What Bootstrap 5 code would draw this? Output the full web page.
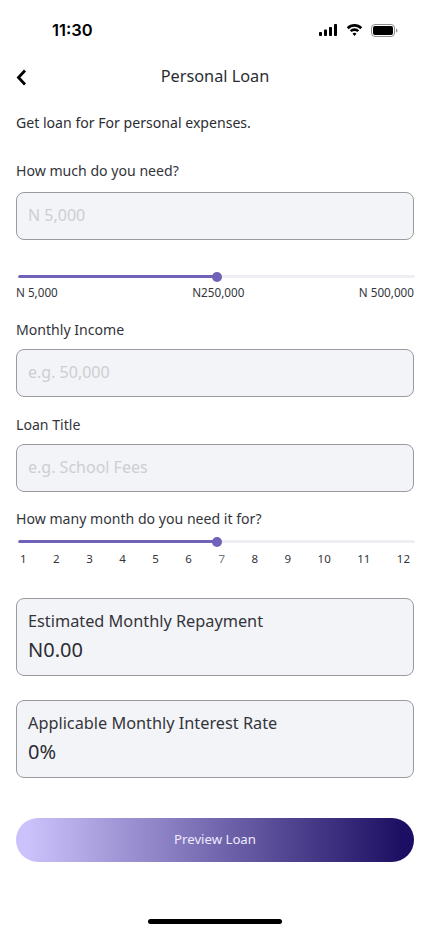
<!DOCTYPE html>
<html lang="en">
<head>
<meta charset="utf-8">
<title>Personal Loan</title>
<meta name="viewport" content="width=device-width, initial-scale=1">
<link href="https://cdn.jsdelivr.net/npm/bootstrap@5.3.0/dist/css/bootstrap.min.css" rel="stylesheet">
<style>
html,body{height:100%}
body{font-family:"Noto Sans","Open Sans",sans-serif;color:#2b2d33;background:#fff;font-size:14px}
.phone{width:430px;height:932px;overflow:hidden;background:#fff}
.status-bar{height:60px;padding:0 32px 0 52px;align-items:center}
.status-time{font-family:Inter,"Liberation Sans",sans-serif;font-weight:600;font-size:16.5px;line-height:20px;color:#000}
.head-row{height:32px;padding:0 16px;position:relative;align-items:center;justify-content:center}
.head-back{position:absolute;left:16px;top:9px;line-height:0;background:none;border:0;padding:0}
.head-title{font-size:16.3px;line-height:32px;margin:0;font-weight:400;color:#2b2d33}
.content{padding:0 16px}
.intro{margin:19px 0 0;line-height:24px;font-size:14.1px;height:24px}
.fld-label{font-size:14.1px;line-height:20px;margin:0;color:#33353b;display:block}
.fld-input.form-control{height:48px;background:#f3f4f8;border:1px solid #9b9b9f;border-radius:8px;font-size:16px;padding:0 11px 2px;color:#22242a;font-family:"Noto Sans",sans-serif}
.fld-input.form-control::placeholder{color:#cdced1;opacity:1}
.range-wrap{position:relative;margin-left:2px;width:397px}
.range-wrap .progress{height:3px;background:#eeeef3;border-radius:2px}
.range-wrap .progress-bar{background:#6f62b8;border-radius:2px}
.range-knob{position:absolute;top:-3.5px;width:10px;height:10px;border-radius:50%;background:#6f62b8;margin-left:-5px}
.tick-row{font-size:11.7px;line-height:16px;color:#33353b}
.tick-mid{margin-left:20px}
.num-row{padding:0 4px;font-size:11.5px;line-height:16px;color:#33353b}
.num-dim{color:#77787d}
.out-box{height:78px;background:#f3f4f8;border:1px solid #9b9b9f;border-radius:8px;padding:10px 11px 0}
.out-label{font-size:16.3px;line-height:24px;color:#33353b;margin:0}
.out-value{font-size:20px;line-height:30px;color:#2b2d33;margin:2px 0 0}
.cta.btn{display:block;width:100%;height:44px;border:0;border-radius:22px;color:#efeaff;font-size:13.2px;background:linear-gradient(90deg,#cbc2fb 0%,#cbc2fb 3%,#1c0f63 97%,#1c0f63 100%);padding:0}
.home-bar{width:134px;height:5px;border-radius:3px;background:#000;margin:57px auto 0}
.m-a{margin-top:26px}.m-b{margin-top:11px}.m-c{margin-top:35px}.m-d{margin-top:6px}.m-n{margin-top:8px}.m-e{margin-top:20px}.m-f{margin-top:9px}.m-g{margin-top:18px}.m-h{margin-top:17px}.m-i{margin-top:31px}.m-j{margin-top:24px}.m-k{margin-top:40px}
</style>
</head>
<body>
<div class="phone">
  <div class="status-bar d-flex justify-content-between">
    <span class="status-time">11:30</span>
    <span class="d-flex align-items-center gap-1">
      <svg width="19" height="12" viewBox="0 0 19 12"><rect x="0" y="8" width="3" height="4" rx=".8"/><rect x="5" y="5.5" width="3" height="6.5" rx=".8"/><rect x="10" y="3" width="3" height="9" rx=".8"/><rect x="15" y="0" width="3" height="12" rx=".8"/></svg>
      <svg class="ms-1" width="17" height="12" viewBox="0 0 17 12"><path d="M8.500 2.800c2.300 0 4.300.9 5.800 2.400l1.900-2A10.800 10.800 0 0 0 8.500 0C5.500 0 2.800 1.200.8 3.200l1.900 2a8.200 8.200 0 0 1 5.800-2.400z"/><path d="M8.500 6.900c1.100 0 2.100.4 2.900 1.200l1.800-1.900a6.700 6.700 0 0 0-9.400 0l1.800 1.900c.8-.8 1.800-1.200 2.900-1.200z"/><path d="M8.500 12l2-2.200a2.900 2.900 0 0 0-4 0z"/></svg>
      <svg class="ms-1" width="27" height="13" viewBox="0 0 27 13"><rect x=".5" y=".5" width="23" height="12" rx="3.500" fill="none" stroke="#8e8e8e"/><rect x="2" y="2" width="20" height="9" rx="2"/><path d="M25 4.500v4c.8-.3 1.400-1.100 1.400-2s-.6-1.700-1.400-2z" fill="#8e8e8e"/></svg>
    </span>
  </div>
  <div class="head-row d-flex">
    <button class="head-back" type="button" aria-label="Back"><svg width="11" height="17" viewBox="0 0 11 17"><path d="M9 1.500 2.500 8.500 9 15.500" fill="none" stroke="#000" stroke-width="2.800"/></svg></button>
    <h1 class="head-title">Personal Loan</h1>
  </div>
  <div class="content">
    <p class="intro">Get loan for For personal expenses.</p>
    <label class="fld-label m-a">How much do you need?</label>
    <input class="form-control fld-input m-b" placeholder="N 5,000">
    <div class="range-wrap m-c">
      <div class="progress"><div class="progress-bar" style="width:50%"></div></div>
      <span class="range-knob" style="left:50%"></span>
    </div>
    <div class="tick-row d-flex justify-content-between m-d"><span>N 5,000</span><span class="tick-mid">N250,000</span><span>N 500,000</span></div>
    <label class="fld-label m-e">Monthly Income</label>
    <input class="form-control fld-input m-f" placeholder="e.g. 50,000">
    <label class="fld-label m-g">Loan Title</label>
    <input class="form-control fld-input m-f" placeholder="e.g. School Fees">
    <label class="fld-label m-h">How many month do you need it for?</label>
    <div class="range-wrap m-b">
      <div class="progress"><div class="progress-bar" style="width:50%"></div></div>
      <span class="range-knob" style="left:50%"></span>
    </div>
    <div class="num-row d-flex justify-content-between m-n"><span>1</span><span>2</span><span>3</span><span>4</span><span>5</span><span>6</span><span class="num-dim">7</span><span>8</span><span>9</span><span>10</span><span>11</span><span>12</span></div>
    <div class="out-box m-i"><p class="out-label">Estimated Monthly Repayment</p><p class="out-value">N0.00</p></div>
    <div class="out-box m-j"><p class="out-label">Applicable Monthly Interest Rate</p><p class="out-value">0%</p></div>
    <button class="btn cta m-k" type="button">Preview Loan</button>
  </div>
  <div class="home-bar"></div>
</div>
<script src="https://cdn.jsdelivr.net/npm/bootstrap@5.3.0/dist/js/bootstrap.bundle.min.js"></script>
</body>
</html>
